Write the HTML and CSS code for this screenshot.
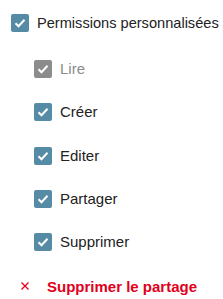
FILE: index.html
```
<!DOCTYPE html>
<html lang="fr">
<head>
    <meta charset="UTF-8">
    <title>Permissions</title>
    <link rel="stylesheet" href="styles.css">
</head>
<body>
    <div class="perms">
        <label class="item">
            <span class="box"><svg viewBox="0 0 18 18"><path d="M4.5 9.2l3 3 6-6.4"/></svg></span>
            <span class="lb">Permissions personnalisées</span>
        </label>
        <div class="sub">
            <label class="item disabled">
                <span class="box"><svg viewBox="0 0 18 18"><path d="M4.5 9.2l3 3 6-6.4"/></svg></span>
                <span class="lb">Lire</span>
            </label>
            <label class="item">
                <span class="box"><svg viewBox="0 0 18 18"><path d="M4.5 9.2l3 3 6-6.4"/></svg></span>
                <span class="lb">Créer</span>
            </label>
            <label class="item">
                <span class="box"><svg viewBox="0 0 18 18"><path d="M4.5 9.2l3 3 6-6.4"/></svg></span>
                <span class="lb">Editer</span>
            </label>
            <label class="item">
                <span class="box"><svg viewBox="0 0 18 18"><path d="M4.5 9.2l3 3 6-6.4"/></svg></span>
                <span class="lb">Partager</span>
            </label>
            <label class="item">
                <span class="box"><svg viewBox="0 0 18 18"><path d="M4.5 9.2l3 3 6-6.4"/></svg></span>
                <span class="lb">Supprimer</span>
            </label>
        </div>
        <a class="remove" href="javascript:;">
            <svg viewBox="0 0 10 10"><path d="M1.5 1.5l7 7M8.5 1.5l-7 7"/></svg>
            <span>Supprimer le partage</span>
        </a>
    </div>
</body>
</html>
```

FILE: styles.css
```
* {
    padding: 0;
    margin: 0;
    box-sizing: border-box;
}

body {
    font-family: "Liberation Sans", Arial, sans-serif;
    font-size: 15px;
    color: #222;
    background: #fff;
}

.perms {
    padding: 14px 0 0 11px;
    display: flex;
    flex-direction: column;
}

.item {
    display: flex;
    align-items: center;
    gap: 8px;
    height: 18px;
    white-space: nowrap;
}

.sub {
    display: flex;
    flex-direction: column;
    gap: 25.3px;
    padding: 28px 0 0 23px;
}

.box {
    width: 18px;
    height: 18px;
    border-radius: 2px;
    background-color: #558ba5;
    display: flex;
}

.box svg {
    width: 18px;
    height: 18px;
    fill: none;
    stroke: #fff;
    stroke-width: 2;
}

.lb {
    line-height: 18px;
}

.perms > .item .lb {
    font-size: 14.6px;
}

.disabled .box {
    background-color: #8c8c8c;
}

.disabled .lb {
    color: #8c8c8c;
}

.remove {
    display: flex;
    align-items: center;
    gap: 17px;
    margin: 26px 0 0 9px;
    height: 18px;
    color: #e0001b;
    font-weight: bold;
    text-decoration: none;
    white-space: nowrap;
}

.remove svg {
    width: 10px;
    height: 10px;
    fill: none;
    stroke: #e0001b;
    stroke-width: 1.3;
}
```
